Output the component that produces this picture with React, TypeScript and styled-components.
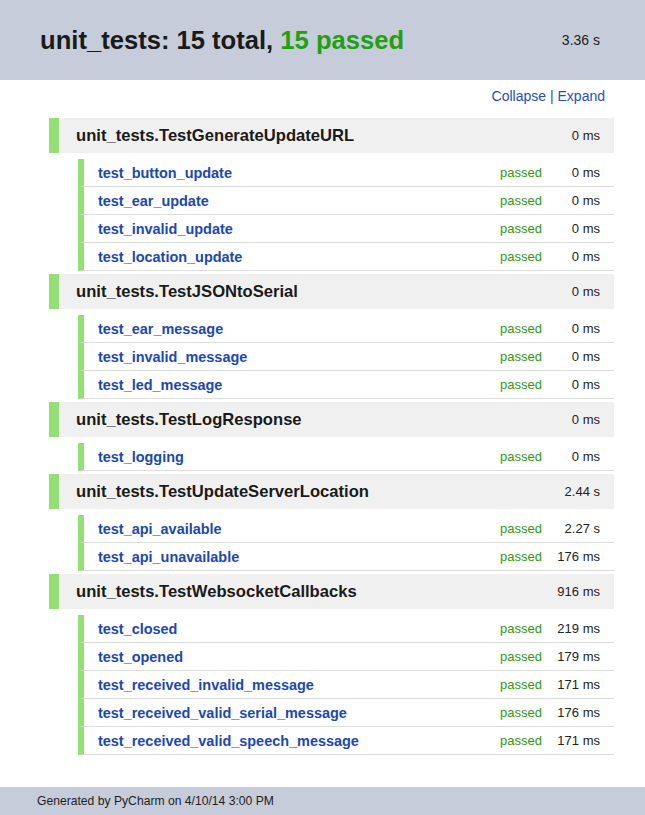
import styled, { createGlobalStyle } from "styled-components";

const GlobalStyle = createGlobalStyle`
  html, body {
    margin: 0;
    padding: 0;
    background: #ffffff;
    font-family: "Liberation Sans", Arial, sans-serif;
    color: #1e1e1e;
  }
`

const Page = styled.div`
  min-height: 100vh;
  display: flex;
  flex-direction: column;
`

const Header = styled.header`
  height: 80px;
  background: #c6ccd9;
  display: flex;
  align-items: center;
  justify-content: space-between;
  padding: 0 45px 0 40px;
  box-sizing: border-box;
`

const Title = styled.h1`
  margin: 0;
  font-size: 25.6px;
  font-weight: bold;
  color: #1a1a1a;
  .passed {
    color: #22a00f;
  }
`

const TotalTime = styled.div`
  font-size: 14px;
  color: #222;
`

const Main = styled.main`
  padding: 0 31px 0 49px;
  flex: 1;
`

const Toolbar = styled.div`
  text-align: right;
  padding: 8px 9px 0 0;
  line-height: 16px;
  height: 16px;
  margin-bottom: 14px;
  font-size: 14px;
  color: #1f4fc0;
  a {
    color: #1f4fc0;
    text-decoration: none;
  }
`

const Suite = styled.section`
  margin-bottom: 3px;
`

const SuiteHeader = styled.div`
  height: 35px;
  background: #f0f0f0;
  border-left: 10px solid #94e077;
  display: flex;
  align-items: center;
  justify-content: space-between;
  padding: 0 14px 0 17px;
`

const SuiteName = styled.span`
  font-size: 16.6px;
  font-weight: bold;
  color: #1a1a1a;
`

const Time = styled.span`
  font-size: 13px;
  color: #222;
  text-align: right;
`

const TestList = styled.div`
  margin: 6px 0 0 29px;
`

const TestRow = styled.div`
  display: grid;
  grid-template-columns: 1fr auto 50px;
  column-gap: 8px;
  align-items: center;
  height: 27px;
  border-left: 6px solid #94e077;
  border-bottom: 1px solid #dcdcdc;
  padding: 0 14px 0 14px;
`

const TestName = styled.span`
  font-size: 14.45px;
  font-weight: bold;
  color: #1a47b8;
`

const Status = styled.span`
  font-size: 13px;
  color: #2a9d14;
`

const Footer = styled.footer`
  height: 28px;
  line-height: 28px;
  background: #c6ccd9;
  padding-left: 37px;
  font-size: 12.15px;
  color: #1e1e1e;
`

interface TestCase {
  name: string
  time: string
}

interface TestSuite {
  name: string
  time: string
  tests: TestCase[]
}

const suites: TestSuite[] = [
  {
    name: "unit_tests.TestGenerateUpdateURL",
    time: "0 ms",
    tests: [
      { name: "test_button_update", time: "0 ms" },
      { name: "test_ear_update", time: "0 ms" },
      { name: "test_invalid_update", time: "0 ms" },
      { name: "test_location_update", time: "0 ms" },
    ],
  },
  {
    name: "unit_tests.TestJSONtoSerial",
    time: "0 ms",
    tests: [
      { name: "test_ear_message", time: "0 ms" },
      { name: "test_invalid_message", time: "0 ms" },
      { name: "test_led_message", time: "0 ms" },
    ],
  },
  {
    name: "unit_tests.TestLogResponse",
    time: "0 ms",
    tests: [{ name: "test_logging", time: "0 ms" }],
  },
  {
    name: "unit_tests.TestUpdateServerLocation",
    time: "2.44 s",
    tests: [
      { name: "test_api_available", time: "2.27 s" },
      { name: "test_api_unavailable", time: "176 ms" },
    ],
  },
  {
    name: "unit_tests.TestWebsocketCallbacks",
    time: "916 ms",
    tests: [
      { name: "test_closed", time: "219 ms" },
      { name: "test_opened", time: "179 ms" },
      { name: "test_received_invalid_message", time: "171 ms" },
      { name: "test_received_valid_serial_message", time: "176 ms" },
      { name: "test_received_valid_speech_message", time: "171 ms" },
    ],
  },
];

export default function App() {
  return <Page>
    <GlobalStyle />
    <Header>
      <Title>unit_tests: 15 total, <span className="passed">15 passed</span></Title>
      <TotalTime>3.36 s</TotalTime>
    </Header>
    <Main>
      <Toolbar>
        <a href="#">Collapse</a> | <a href="#">Expand</a>
      </Toolbar>
      {
        suites.map(suite => (<Suite key={suite.name}>
          <SuiteHeader>
            <SuiteName>{suite.name}</SuiteName>
            <Time>{suite.time}</Time>
          </SuiteHeader>
          <TestList>
            {
              suite.tests.map(t => (<TestRow key={t.name}>
                <TestName>{t.name}</TestName>
                <Status>passed</Status>
                <Time>{t.time}</Time>
              </TestRow>))
            }
          </TestList>
        </Suite>))
      }
    </Main>
    <Footer>Generated by PyCharm on 4/10/14 3:00 PM</Footer>
  </Page>
}
